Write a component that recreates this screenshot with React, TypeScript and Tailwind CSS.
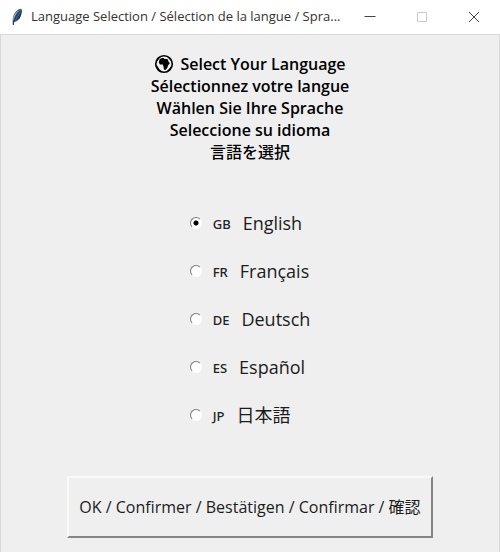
import { useState } from "react";

const headings = [
  "Sélectionnez votre langue",
  "Wählen Sie Ihre Sprache",
  "Seleccione su idioma",
];

const languages = [
  { code: "GB", name: "English" },
  { code: "FR", name: "Français" },
  { code: "DE", name: "Deutsch" },
  { code: "ES", name: "Español" },
  { code: "JP", name: "日本語" },
];

function Feather() {
  return (
    <svg viewBox="0 0 12 18" className="h-[18px] w-3 shrink-0" aria-hidden="true">
      <path d="M2 17C1.300 12 1.500 7 5 3.500C7 1.500 9 .5 10.500 1C11.300 4 10 7.500 8.500 10.500C7 13 4.500 14 3.200 14L2.500 17Z" fill="#3d5f86" />
      <path d="M3 12C3.500 8 5 5 8.500 2.500C5 3.500 2 7 2.300 12Z" fill="#8fb0d0" />
      <path d="M10.500 1C11.300 4 10 7.500 8.500 10.500L5 12.500L9.500 5Z" fill="#20334e" />
      <path d="M2.200 17C3 12 5 7.500 8.500 3.500" fill="none" stroke="#17263b" strokeWidth=".8" />
    </svg>
  );
}

function Globe() {
  return (
    <svg viewBox="0 0 20 20" className="h-5 w-5 shrink-0" aria-hidden="true">
      <circle cx="10" cy="10" r="8.300" fill="#efefef" stroke="#000" strokeWidth="1.600" />
      <path d="M5.500 5.500C6.500 4 8 4 9.500 4L10.500 5L13.500 5L15 8.500L16 9L14 11.500L13.500 13.500L11.500 16L10 15.500L9.500 12.500L8.800 10.500L6 10.500L4.800 8.500Z" fill="#000" />
      <path d="M2 9C2.300 5 4.500 2.500 8 2L6 3.500L3.800 6.500Z M12 2L15.500 3.500L18 7.500L16 6L14 3.500Z M2 11L3.500 12L5.500 15.500L9 18L5 17.500L2.500 14Z M18 11L16.500 15.500L12 18L15 15Z" fill="#000" />
    </svg>
  );
}

export default function App() {
  const [selected, setSelected] = useState("GB");
  return (
    <div className="flex min-h-screen flex-col bg-[#efefef] font-['Open_Sans','Noto_Sans_CJK_JP',sans-serif] text-[#1c1c1c]">
      <header className="flex h-[34px] items-center bg-white pl-[11px]">
        <Feather />
        <h1 className="ml-2 min-w-0 flex-1 truncate text-[13px] text-[#333]">
          Language Selection / Sélection de la langue / Spra...
        </h1>
        <div className="flex h-full shrink-0">
          <button type="button" aria-label="Minimize" className="flex w-[52px] items-center justify-center">
            <svg viewBox="0 0 12 12" className="h-3 w-3" fill="none" stroke="#444">
              <path d="M.5 5.500H11.500" />
            </svg>
          </button>
          <button type="button" aria-label="Maximize" disabled className="flex w-[52px] items-center justify-center">
            <svg viewBox="0 0 12 12" className="h-3 w-3" fill="none" stroke="#ccc">
              <path d="M1.500 1.500H10.500V10.500H1.500Z" />
            </svg>
          </button>
          <button type="button" aria-label="Close" className="flex w-[52px] items-center justify-center">
            <svg viewBox="0 0 12 12" className="h-3 w-3" fill="none" stroke="#444">
              <path d="M1 1L11 11M11 1L1 11" />
            </svg>
          </button>
        </div>
      </header>
      <main className="flex flex-1 flex-col items-center border-x border-t border-[#d8d8d8] pt-[18px]">
        <h2 className="flex flex-col items-center text-[16px] leading-[22px] font-semibold text-black">
          <span className="flex items-center gap-1.5">
            <Globe />
            Select Your Language
          </span>
          {headings.map((line) => (
            <span key={line}>{line}</span>
          ))}
          <span className="font-medium">言語を選択</span>
        </h2>
        <div role="radiogroup" aria-label="Language" className="mt-9 flex flex-col">
          {languages.map(({ code, name }) => (
            <label key={code} className="flex h-12 items-center">
              <input
                type="radio"
                name="language"
                value={code}
                checked={selected === code}
                onChange={() => setSelected(code)}
                className="mr-[11px] h-3 w-3 appearance-none rounded-full border border-t-[#777] border-r-white border-b-white border-l-[#777] bg-white bg-[radial-gradient(circle,#000_2px,transparent_3px)] [&:not(:checked)]:bg-none"
              />
              <span className="mr-3 pt-1 font-['Noto_Sans','Open_Sans',sans-serif] text-[13px] font-medium text-[#222]">{code}</span>
              <span className="text-[18px]">{name}</span>
            </label>
          ))}
        </div>
        <button
          type="button"
          className="mt-[37px] h-[62px] border-2 border-t-[#f9f9f9] border-r-[#858585] border-b-[#858585] border-l-[#f9f9f9] px-2.5 text-[16px]"
        >
          OK / Confirmer / Bestätigen / Confirmar / 確認
        </button>
      </main>
    </div>
  );
}
